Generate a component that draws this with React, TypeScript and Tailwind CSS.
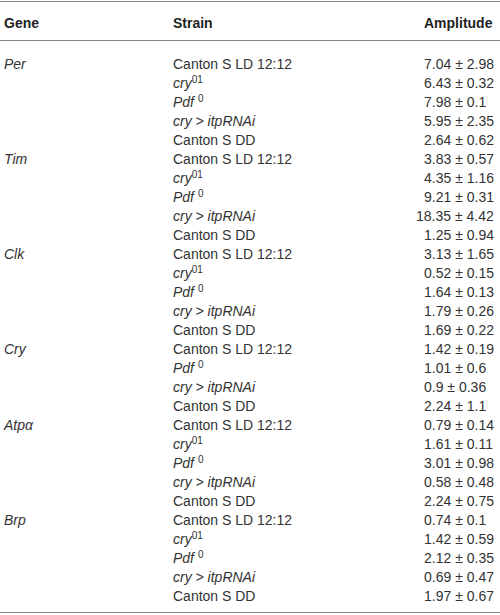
import type { ReactNode } from "react";

type Row = { gene?: ReactNode; strain: ReactNode; amp: string };

const cry01 = (
	<>
		<i>cry</i>
		<sup className="text-[10px]">01</sup>
	</>
);
const pdf0 = (
	<>
		<i>Pdf</i> <sup className="text-[10px]">0</sup>
	</>
);
const itp = <i>cry &gt; itpRNAi</i>;

// each gene group: strain / amplitude pairs
const groups: { gene: string; rows: [ReactNode, string][] }[] = [
	{
		gene: "Per",
		rows: [
			["Canton S LD 12:12", "7.04 ± 2.98"],
			[cry01, "6.43 ± 0.32"],
			[pdf0, "7.98 ± 0.1"],
			[itp, "5.95 ± 2.35"],
			["Canton S DD", "2.64 ± 0.62"],
		],
	},
	{
		gene: "Tim",
		rows: [
			["Canton S LD 12:12", "3.83 ± 0.57"],
			[cry01, "4.35 ± 1.16"],
			[pdf0, "9.21 ± 0.31"],
			[itp, "18.35 ± 4.42"],
			["Canton S DD", "1.25 ± 0.94"],
		],
	},
	{
		gene: "Clk",
		rows: [
			["Canton S LD 12:12", "3.13 ± 1.65"],
			[cry01, "0.52 ± 0.15"],
			[pdf0, "1.64 ± 0.13"],
			[itp, "1.79 ± 0.26"],
			["Canton S DD", "1.69 ± 0.22"],
		],
	},
	{
		gene: "Cry",
		rows: [
			["Canton S LD 12:12", "1.42 ± 0.19"],
			[pdf0, "1.01 ± 0.6"],
			[itp, "0.9 ± 0.36"],
			["Canton S DD", "2.24 ± 1.1"],
		],
	},
	{
		gene: "Atpα",
		rows: [
			["Canton S LD 12:12", "0.79 ± 0.14"],
			[cry01, "1.61 ± 0.11"],
			[pdf0, "3.01 ± 0.98"],
			[itp, "0.58 ± 0.48"],
			["Canton S DD", "2.24 ± 0.75"],
		],
	},
	{
		gene: "Brp",
		rows: [
			["Canton S LD 12:12", "0.74 ± 0.1"],
			[cry01, "1.42 ± 0.59"],
			[pdf0, "2.12 ± 0.35"],
			[itp, "0.69 ± 0.47"],
			["Canton S DD", "1.97 ± 0.67"],
		],
	},
];

const rows: Row[] = groups.flatMap((g) =>
	g.rows.map(([strain, amp], i) => ({
		gene: i === 0 ? <i>{g.gene}</i> : undefined,
		strain,
		amp,
	})),
);

export default function App() {
	return (
		<div className="w-[500px] h-[615px] bg-white pt-px font-['Liberation_Sans',Arial,sans-serif] text-[14px] leading-[19px] text-[#333]">
			{/* Header */}
			<div className="grid grid-cols-[169px_251px_1fr] border-y border-[#8a8a8a] px-1 pt-[12px] pb-[7px] font-bold text-[#1f1f1f]">
				<div>Gene</div>
				<div>Strain</div>
				<div>Amplitude</div>
			</div>

			{/* Body */}
			<div className="border-b border-[#8a8a8a] px-1 pt-[14px] pb-[6px]">
				{rows.map((r, i) => (
					<div key={i} className="grid grid-cols-[169px_251px_1fr] h-[19px] whitespace-nowrap">
						<div>{r.gene}</div>
						<div>{r.strain}</div>
						{/* the one two-digit value sticks out to the left */}
						<div className={r.amp.length > 11 ? "-ml-[8px]" : ""}>{r.amp}</div>
					</div>
				))}
			</div>
		</div>
	);
}
